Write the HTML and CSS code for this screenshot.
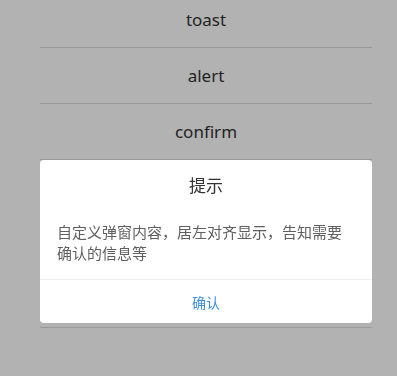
FILE: index.html
```html
<!DOCTYPE html>
<html lang="zh">
<head>
<meta charset="utf-8">
<link rel="stylesheet" href="styles.css">
</head>
<body>
<div class="page">
  <ul class="menu">
    <li class="item">toast</li>
    <li class="item">alert</li>
    <li class="item">confirm</li>
    <li class="item">prompt</li>
    <li class="item">loading</li>
    <li class="item">actionsheet</li>
  </ul>
</div>
<div class="mask"></div>
<div class="dialog">
  <div class="dialog-title">提示</div>
  <div class="dialog-body">自定义弹窗内容，居左对齐显示，告知需要确认的信息等</div>
  <div class="dialog-footer">
    <button class="dialog-btn">确认</button>
  </div>
</div>
</body>
</html>
```
FILE: styles.css
```css
html, body {
  margin: 0;
  padding: 0;
  height: 100%;
  overflow: hidden;
  background: #fff;
  font-family: "Noto Sans", "Noto Sans CJK SC", sans-serif;
}
.page {
  padding: 0 25px 0 40px;
}
.menu {
  list-style: none;
  margin: -8px 0 0 0;
  padding: 0;
}
.item {
  height: 55px;
  line-height: 56px;
  text-align: center;
  font-size: 17px;
  color: #333;
  border-bottom: 1px solid #dcdcdc;
}
.mask {
  position: fixed;
  inset: 0;
  background: rgba(0, 0, 0, 0.3);
}
.dialog {
  position: fixed;
  left: 40px;
  top: 160px;
  width: 332px;
  background: #fff;
  border-radius: 4px;
  overflow: hidden;
}
.dialog-title {
  height: 48px;
  line-height: 50px;
  text-align: center;
  font-size: 17px;
  color: #333;
  font-family: "Noto Sans CJK SC", sans-serif;
}
.dialog-body {
  padding: 13px 17px 16px 17px;
  font-size: 15px;
  line-height: 21px;
  color: #5f5f5f;
  font-family: "Noto Sans CJK SC", sans-serif;
}
.dialog-footer {
  border-top: 1px solid #f0f0f0;
  height: 43px;
  display: flex;
}
.dialog-btn {
  flex: 1;
  border: 0;
  background: transparent;
  font-size: 14px;
  color: #3b8ee0;
  font-family: "Noto Sans CJK SC", sans-serif;
  padding: 0;
}
```
